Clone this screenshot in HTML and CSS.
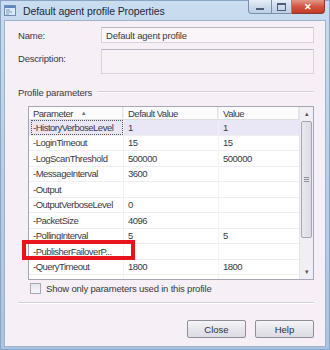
FILE: index.html
```html
<!DOCTYPE html>
<html lang="en">
<head>
    <meta charset="UTF-8">
    <title>Default agent profile Properties</title>
    <link rel="stylesheet" href="styles.css">
</head>
<body>

<div class="window">
    <div class="titlebar">
        <svg class="app-icon" width="12" height="11" viewBox="0 0 12 11">
            <rect x="0.5" y="0.5" width="11" height="10" fill="#dbe8f5" stroke="#6d8fb5"/>
            <rect x="1" y="1" width="10" height="2" fill="#5b86c0"/>
            <rect x="2" y="4.5" width="4" height="1" fill="#7c9cc4"/>
            <rect x="2" y="6.5" width="6" height="1" fill="#7c9cc4"/>
            <rect x="2" y="8.5" width="3" height="1" fill="#7c9cc4"/>
        </svg>
        <span class="title">Default agent profile Properties</span>
        <div class="caption-buttons">
            <div class="cap-btn min"><span class="min-glyph"></span></div>
            <div class="cap-btn max"><span class="max-glyph"></span></div>
            <div class="cap-btn close">&#x2715;</div>
        </div>
    </div>

    <div class="client">
        <div class="field-row">
            <label>Name:</label>
            <div class="textbox">Default agent profile</div>
        </div>
        <div class="field-row">
            <label class="desc-label">Description:</label>
            <div class="textbox tall"></div>
        </div>

        <div class="group-title">
            <span>Profile parameters</span>
            <div class="rule"></div>
        </div>

        <div class="grid-wrap">
            <div class="grid">
                <div class="grid-body">
                    <div class="row head">
                        <div class="cell c1">Parameter <span class="sort">&#x25B2;</span></div>
                        <div class="cell c2">Default Value</div>
                        <div class="cell c3">Value</div>
                    </div>
                    <div class="rows" id="rows"></div>
                </div>
                <div class="scrollbar">
                    <div class="arrow">&#x25B4;</div>
                    <div class="track">
                        <div class="thumb"><span class="grip"></span></div>
                    </div>
                    <div class="arrow">&#x25BE;</div>
                </div>
            </div>
            <div class="highlight"></div>
        </div>

        <div class="check-row">
            <span class="checkbox"></span>
            <span>Show only parameters used in this profile</span>
        </div>

        <div class="separator"></div>

        <div class="buttons">
            <button class="btn">Close</button>
            <button class="btn">Help</button>
        </div>
    </div>
</div>

<script>
    const params = [
        ["-HistoryVerboseLevel", "1", "1"],
        ["-LoginTimeout", "15", "15"],
        ["-LogScanThreshold", "500000", "500000"],
        ["-MessageInterval", "3600", ""],
        ["-Output", "", ""],
        ["-OutputVerboseLevel", "0", ""],
        ["-PacketSize", "4096", ""],
        ["-PollingInterval", "5", "5"],
        ["-PublisherFailoverP...", "", ""],
        ["-QueryTimeout", "1800", "1800"],
        ["-ReadBatchSize", "500", "500"]
    ];

    const rows = document.getElementById("rows");

    params.forEach((p, i) => {
        let row = document.createElement("div");
        row.classList.add("row");
        if (i === 0) row.classList.add("selected");
        p.forEach((text, j) => {
            let cell = document.createElement("div");
            cell.classList.add("cell", "c" + (j + 1));
            cell.textContent = text;
            row.appendChild(cell);
        });
        rows.appendChild(row);
    });
</script>

</body>
</html>
```

FILE: styles.css
```css
body {
    margin: 0;
    font-family: "Liberation Sans", Arial, sans-serif;
    font-size: 9.5px;
    letter-spacing: -0.2px;
    color: #3a3a42;
}
.window {
    width: 330px;
    height: 350px;
    background: linear-gradient(#c9dcf0, #b9d0ea 40%, #aac4e3);
    display: flex;
    flex-direction: column;
    box-sizing: border-box;
    border: 1px solid #8aa4c3;
}
.titlebar {
    height: 19px;
    display: flex;
    align-items: center;
    padding-left: 3px;
    position: relative;
}
.app-icon {
    margin-right: 7px;
}
.title {
    font-size: 10.5px;
    color: #1e2a3a;
    letter-spacing: -0.1px;
}
.caption-buttons {
    position: absolute;
    top: -1px;
    right: 4px;
    display: flex;
    height: 14px;
}
.cap-btn {
    border: 1px solid #7d8fa6;
    border-top: none;
    background: linear-gradient(#e6eef8, #cddbed 50%, #bccfe6);
    display: flex;
    align-items: center;
    justify-content: center;
    box-sizing: border-box;
}
.cap-btn.min {
    width: 24px;
    border-bottom-left-radius: 4px;
}
.cap-btn.max {
    width: 20px;
    border-left: none;
}
.cap-btn.close {
    width: 33px;
    border-left: none;
    border-bottom-right-radius: 4px;
    background: linear-gradient(#e49a8a, #d2553f 50%, #c23a27);
    border-color: #8a3a30;
    color: #fff;
    font-size: 9px;
    font-weight: bold;
}
.min-glyph {
    width: 8px;
    height: 2px;
    margin-top: 4px;
    background: #4f5e72;
}
.max-glyph {
    width: 7px;
    height: 5px;
    border: 1px solid #4f5e72;
    border-top-width: 2px;
}
.client {
    flex: 1;
    margin: 0 3px 2px 3px;
    background: #f6eff5;
    border: 1px solid #9fb2c9;
    display: flex;
    flex-direction: column;
    padding: 6px 11px 0 13px;
}
.field-row {
    display: grid;
    grid-template-columns: 83px 1fr;
    margin-bottom: 6px;
    align-items: center;
}
.field-row label {
    padding-top: 1px;
}
.desc-label {
    align-self: start;
    padding-top: 4px !important;
}
.textbox {
    height: 16px;
    border: 1px solid #d8d2dc;
    border-top-color: #bcb6c2;
    background: #f9f5f9;
    box-sizing: border-box;
    padding: 2px 4px;
}
.textbox.tall {
    height: 25px;
    background: #f6f2f6;
}
.group-title {
    display: flex;
    align-items: center;
    margin-top: 4px;
    height: 16px;
}
.group-title .rule {
    flex: 1;
    margin-left: 5px;
    border-top: 1px solid #d6d0d8;
    border-bottom: 1px solid #ffffff;
}
.grid-wrap {
    position: relative;
    margin: 6px 0 0 10px;
}
.grid {
    display: flex;
    height: 174px;
    border: 1px solid #a5a8b4;
    background: #ffffff;
    box-sizing: border-box;
    overflow: hidden;
}
.grid-body {
    flex: 1;
    overflow: hidden;
}
.row {
    display: grid;
    grid-template-columns: 94px 95px 1fr;
    height: 15.5px;
    align-items: center;
    border-bottom: 1px solid #f0eef2;
    box-sizing: border-box;
}
.row.head {
    height: 13px;
    border-bottom: 1px solid #dcdce2;
    background: #fcfcfd;
}
.row.head .cell {
    border-right: 1px solid #e4e4ea;
}
.cell {
    padding-left: 4px;
    white-space: nowrap;
    overflow: hidden;
    letter-spacing: -0.5px;
    height: 100%;
    display: flex;
    align-items: center;
    box-sizing: border-box;
}
.cell.c2, .cell.c3 {
    border-left: 1px solid #f4f2f5;
}
.sort {
    font-size: 6px;
    color: #6d7686;
    margin-left: 8px;
}
.row.selected {
    background: #e9e7f6;
}
.row.selected .c1 {
    outline: 1px dotted #55555d;
    outline-offset: -1px;
    margin-left: 2px;
    padding-left: 2px;
}
.scrollbar {
    width: 13px;
    background: #f1eff3;
    border-left: 1px solid #e6e4e8;
    display: flex;
    flex-direction: column;
}
.arrow {
    height: 14px;
    font-size: 7px;
    color: #55565e;
    display: flex;
    align-items: center;
    justify-content: center;
}
.track {
    flex: 1;
    padding: 0 1px;
}
.thumb {
    height: 117px;
    border: 1px solid #a3a6b3;
    border-radius: 2px;
    background: linear-gradient(90deg, #e9e8ef, #dcdbe3);
    display: flex;
    align-items: center;
    justify-content: center;
    box-sizing: border-box;
}
.grip {
    width: 5px;
    height: 6px;
    background: repeating-linear-gradient(#8e909c 0 1px, #e4e3ea 1px 2px);
}
.highlight {
    position: absolute;
    left: -6px;
    top: 134px;
    width: 113px;
    height: 20px;
    border: 4px solid #e8141b;
    box-sizing: border-box;
}
.check-row {
    display: flex;
    align-items: center;
    margin: 3px 0 0 12px;
    height: 11px;
}
.checkbox {
    width: 9px;
    height: 9px;
    border: 1px solid #a7a9b3;
    background: linear-gradient(#e7e6ec, #f7f6f9);
    margin-right: 5px;
}
.separator {
    margin: 8px 0 0 0;
    border-top: 1px solid #d5d0d8;
    border-bottom: 1px solid #ffffff;
}
.buttons {
    display: flex;
    justify-content: flex-end;
    gap: 9px;
    margin-top: 16px;
}
.btn {
    width: 59px;
    height: 18px;
    font-family: "Liberation Sans", Arial, sans-serif;
    font-size: 9.5px;
    color: #2e2e33;
    border: 1px solid #8e8f99;
    border-radius: 2px;
    background: linear-gradient(#f5f4f7, #e7e6ec 50%, #dddce4);
    padding: 0;
}
```
